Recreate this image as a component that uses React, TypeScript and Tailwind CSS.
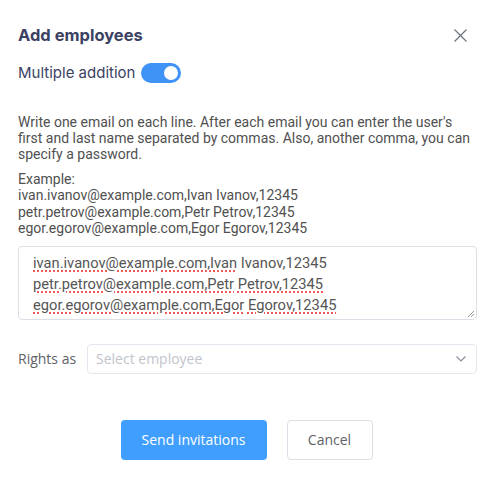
import React, { useState } from 'react';

const Squiggle = ({ children }: { children: React.ReactNode }) => (
  <span className="underline decoration-dotted decoration-[#f05a5a] decoration-2 underline-offset-[3px]">{children}</span>
);

const App = () => {
  const [multiple, setMultiple] = useState(true);

  return (
    <div className="w-[496px] h-[499px] bg-white pl-[18px] pr-[19px] pt-[24px]">
      {/* Header */}
      <div className="flex items-center justify-between h-[22px]">
        <h2 className="text-[16.5px] font-bold text-[#3b4263] font-['Inter',sans-serif]">Add employees</h2>
        <button className="mr-[10px] text-[#6b7480]">
          <svg width="13" height="13" viewBox="0 0 13 13" fill="none" stroke="currentColor" strokeWidth="1.2">
            <path d="M0.5 0.5l12 12M12.5 0.5l-12 12" />
          </svg>
        </button>
      </div>

      {/* Toggle row */}
      <div className="flex items-center gap-[6px] mt-[17px] h-[20px]">
        <span className="text-[15px] text-[#3b4263] font-['Inter',sans-serif]">Multiple addition</span>
        <button
          onClick={() => setMultiple(!multiple)}
          className={`w-[40px] h-[20px] rounded-full flex items-center px-[3px] ${multiple ? 'bg-[#3f93f7] justify-end' : 'bg-[#dcdfe6] justify-start'}`}
        >
          <span className="w-[14px] h-[14px] rounded-full bg-white" />
        </button>
      </div>

      {/* Description */}
      <div className="mt-[31px] text-[14px] leading-[16px] text-[#505050] font-['Roboto',sans-serif]">
        <p>
          Write one email on each line. After each email you can enter the user's first and last name separated by commas. Also, another comma, you can specify a password.
        </p>
        <p className="mt-[9px] leading-[16.4px]">
          Example:
          <br />
          ivan.ivanov@example.com,Ivan Ivanov,12345
          <br />
          petr.petrov@example.com,Petr Petrov,12345
          <br />
          egor.egorov@example.com,Egor Egorov,12345
        </p>
      </div>

      {/* Textarea */}
      <div className="relative mt-[9px] h-[74px] border border-[#dcdfe6] rounded-[4px] pl-[14px] pt-[6px] text-[14.7px] leading-[21px] text-[#555] font-['Roboto',sans-serif]">
        <div>
          <Squiggle>ivan.ivanov@example.com,Ivan</Squiggle> Ivanov,12345
        </div>
        <div>
          <Squiggle>petr.petrov@example.com,Petr</Squiggle> <Squiggle>Petrov,12345</Squiggle>
        </div>
        <div>
          <Squiggle>egor.egorov@example.com,Egor</Squiggle> <Squiggle>Egorov,12345</Squiggle>
        </div>
        <svg className="absolute right-[1px] bottom-[1px]" width="8" height="8" viewBox="0 0 8 8" stroke="#9a9a9a" strokeWidth="1">
          <path d="M7 1L1 7M7 4L4 7" />
        </svg>
      </div>

      {/* Rights as */}
      <div className="flex items-center mt-[24px] font-['Open_Sans',sans-serif]">
        <span className="w-[69px] text-[14px] text-[#606266]">Rights as</span>
        <div className="flex-1 h-[30px] border border-[#e4e7ed] rounded-[4px] flex items-center justify-between pl-[8px] pr-[9px]">
          <span className="text-[14px] text-[#c0c4cc]">Select employee</span>
          <svg width="12" height="8" viewBox="0 0 12 8" fill="none" stroke="#8a8f99" strokeWidth="1.2">
            <path d="M1.5 1.5L6 6l4.5-4.5" />
          </svg>
        </div>
      </div>

      {/* Buttons */}
      <div className="flex justify-center gap-[20px] mt-[46px] mr-[2px] font-['Open_Sans',sans-serif]">
        <button className="w-[146px] h-[40px] rounded-[4px] bg-[#409eff] text-white text-[14px]">Send invitations</button>
        <button className="w-[86px] h-[40px] rounded-[4px] border border-[#dcdfe6] bg-white text-[#606266] text-[14px]">Cancel</button>
      </div>
    </div>
  );
};

export default App;
